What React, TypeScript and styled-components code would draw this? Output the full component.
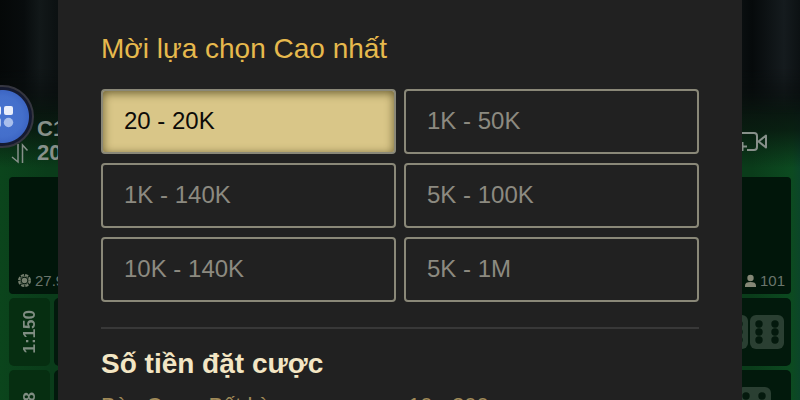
import React, { useState } from "react";
import styled, { createGlobalStyle } from "styled-components";

const GlobalStyle = createGlobalStyle`
  *, *::before, *::after { box-sizing: border-box; }
  body {
    margin: 0;
    background: #0a0d0e;
    font-family: "Liberation Sans", Arial, sans-serif;
  }
`;

const Stage = styled.div`
  position: relative;
  height: 100vh;
  overflow: hidden;
`;

const Table = styled.div`
  display: flex;
  flex-direction: column;
  gap: 4px;
  min-height: 100%;
  padding: 0 9px;
  background:
    linear-gradient(180deg, #0a0f10 0px, #090e0e 90px, rgba(8, 18, 13, 0.75) 130px, rgba(9, 50, 22, 0) 168px),
    linear-gradient(90deg, #0b451c 0%, #0a3c1a 6%, #0a3c1a 94%, #0c4a20 99%, #0b4529 100%);
`;

const Curtain = styled.div`
  height: 114px;
  margin: 0 -9px;
  background: linear-gradient(
    90deg,
    #050808 0%, #080c0d 3%, #121819 5%, #0c1112 7%,
    #0c1112 92%, #060a0b 94%, #151b1e 98%, #0c1113 100%
  );
  mask-image: linear-gradient(180deg, #000 60%, transparent);
`;

const Header = styled.header`
  display: flex;
  align-items: center;
  justify-content: space-between;
  height: 55px;
  padding: 0 24px 10px 2px;
  color: #87908a;
`;

const TableInfo = styled.div`
  display: flex;
  align-items: flex-end;
  gap: 8px;
`;

const TableName = styled.div`
  font-size: 22px;
  line-height: 24px;
  font-weight: 700;
`;

const Board = styled.section`
  display: flex;
  align-items: flex-end;
  justify-content: space-between;
  height: 117px;
  padding: 0 6px 5px 9px;
  border-radius: 4px;
  background: #01160a;
`;

const Stat = styled.div`
  display: flex;
  align-items: center;
  gap: 4px;
  font-size: 15px;
  line-height: 17px;
  color: #6a756c;
`;

const BetRow = styled.div`
  display: grid;
  grid-template-columns: 41px 1fr;
  gap: 4px;
  height: 68px;
  flex: none;
`;

const Odds = styled.div`
  display: flex;
  align-items: center;
  justify-content: center;
  border-radius: 5px;
  background: #062e11;
  color: #7f8d82;
  font-size: 17px;
  font-weight: 700;

  span {
    writing-mode: vertical-rl;
    transform: rotate(180deg);
  }
`;

const BetCell = styled.div<{ $inset: number }>`
  display: flex;
  align-items: center;
  justify-content: flex-end;
  gap: 2px;
  padding-right: ${(p) => p.$inset}px;
  border-radius: 5px;
  background: #02190c;
`;

const FloatButton = styled.button`
  position: absolute;
  top: 85px;
  left: -29px;
  display: grid;
  place-items: center;
  width: 63px;
  height: 63px;
  padding: 0;
  border: 2px solid #353640;
  border-radius: 50%;
  background: radial-gradient(circle, #4773d0 0, #446fcb 20px, #3d66c4 26px, #151a31 27px, #131728 100%);
`;

const Modal = styled.main`
  position: absolute;
  inset: 0 58px;
  overflow: hidden;
  padding: 33px 43px 0;
  background: #212121;
`;

const Title = styled.h1`
  margin: 0 0 24px;
  font-size: 28px;
  line-height: 32px;
  font-weight: 400;
  color: #e6b94d;
`;

const Limits = styled.div`
  display: grid;
  grid-template-columns: 1fr 1fr;
  gap: 9px 8px;
`;

const Limit = styled.button<{ $active: boolean }>`
  height: 65px;
  padding: 0 21px 2px;
  border: 2px solid #8a8878;
  border-radius: 4px;
  background: ${(p) => (p.$active ? "#d9c688" : "transparent")};
  box-shadow: ${(p) => (p.$active ? "inset 0 2px 10px rgba(70, 60, 20, 0.75)" : "none")};
  color: ${(p) => (p.$active ? "#0d0b08" : "#8c8a80")};
  font-family: inherit;
  font-size: 24px;
  line-height: 28px;
  text-align: left;
`;

const Divider = styled.hr`
  height: 2px;
  margin: 25px 0 19px;
  border: 0;
  background: #383838;
`;

const Subtitle = styled.h2`
  margin: 0 0 12px;
  font-size: 28px;
  line-height: 32px;
  font-weight: 700;
  color: #f3e6c4;
`;

const Stakes = styled.table`
  width: 100%;
  border-collapse: collapse;
  font-size: 22px;
  line-height: 28px;
  color: #a08a58;

  th, td {
    width: 50%;
    padding: 0;
    text-align: left;
    font-weight: 400;
  }

  td { padding-left: 8px; }
`;

const Arrows = () => (
  <svg width="18" height="22" viewBox="0 0 18 22" fill="none" stroke="currentColor" strokeWidth="1.5">
    <path d="M7 1v18L1 14M11.500 20V2l5 5.500" />
  </svg>
);

const Camera = () => (
  <svg width="34" height="22" viewBox="0 0 34 22" fill="none" stroke="currentColor" strokeWidth="2">
    <path d="M3 11V6a3 3 0 0 1 3-3h15a3 3 0 0 1 3 3v11a3 3 0 0 1-3 3h-7" />
    <path d="M33 5.500v12l-7.500-6zM9.500 12v9M5 16.500h9" strokeLinejoin="round" />
  </svg>
);

const Chip = () => (
  <svg width="13" height="13" viewBox="0 0 14 14" fill="none" stroke="#76806f">
    <circle cx="7" cy="7" r="6" strokeWidth="2" strokeDasharray="3.500 1.210" />
    <circle cx="7" cy="7" r="4.500" strokeWidth="0.800" />
    <circle cx="7" cy="7" r="3" fill="#76806f" stroke="none" />
  </svg>
);

const Person = () => (
  <svg width="11" height="14" viewBox="0 0 11 14" fill="#858776">
    <circle cx="5.500" cy="4" r="3.200" />
    <path d="M0 13v-1.500C0 9 2 8 5.500 8S11 9 11 11.500V13z" />
  </svg>
);

const Die = () => (
  <svg width="34" height="34" viewBox="0 0 34 34">
    <rect width="34" height="34" rx="6" fill="#2a3f32" />
    {[9, 17, 25].map((y) => (
      <g key={y} fill="#04190d">
        <circle cx="9" cy={y} r="3.700" />
        <circle cx="25" cy={y} r="3.700" />
      </g>
    ))}
  </svg>
);

const GridIcon = () => (
  <svg width="22" height="22" viewBox="0 0 22 22" fill="#e9eefb">
    <rect width="9" height="9" rx="2" />
    <rect x="12" width="9" height="9" rx="2" />
    <rect y="12" width="9" height="9" rx="2" fill="#a9bfec" />
    <circle cx="16.500" cy="16.500" r="4.700" fill="#a9bfec" />
  </svg>
);

const limits = ["20 - 20K", "1K - 50K", "1K - 140K", "5K - 100K", "10K - 140K", "5K - 1M"];

const betRows = [
  { odds: "1:150", inset: 7 },
  { odds: "1:8", inset: 20 },
];

export default function App() {
  const [selected, setSelected] = useState(limits[0]);

  return (
    <Stage>
      <GlobalStyle />
      <Table>
        <Curtain />
        <Header>
          <TableInfo>
            <Arrows />
            <TableName>
              C1
              <br />
              20
            </TableName>
          </TableInfo>
          <Camera />
        </Header>
        <Board>
          <Stat>
            <Chip />
            27.9
          </Stat>
          <Stat>
            <Person />
            101
          </Stat>
        </Board>
        {betRows.map((row) => (
          <BetRow key={row.odds}>
            <Odds>
              <span>{row.odds}</span>
            </Odds>
            <BetCell $inset={row.inset}>
              <Die />
              <Die />
            </BetCell>
          </BetRow>
        ))}
      </Table>

      <FloatButton type="button" aria-label="Menu">
        <GridIcon />
      </FloatButton>

      <Modal>
        <Title>Mời lựa chọn Cao nhất</Title>
        <Limits>
          {limits.map((limit) => (
            <Limit
              key={limit}
              type="button"
              $active={limit === selected}
              aria-pressed={limit === selected}
              onClick={() => setSelected(limit)}
            >
              {limit}
            </Limit>
          ))}
        </Limits>
        <Divider />
        <Subtitle>Số tiền đặt cược</Subtitle>
        <Stakes>
          <tbody>
            <tr>
              <th scope="row">Bàn Cược Bất kỳ</th>
              <td>10 - 200</td>
            </tr>
          </tbody>
        </Stakes>
      </Modal>
    </Stage>
  );
}
